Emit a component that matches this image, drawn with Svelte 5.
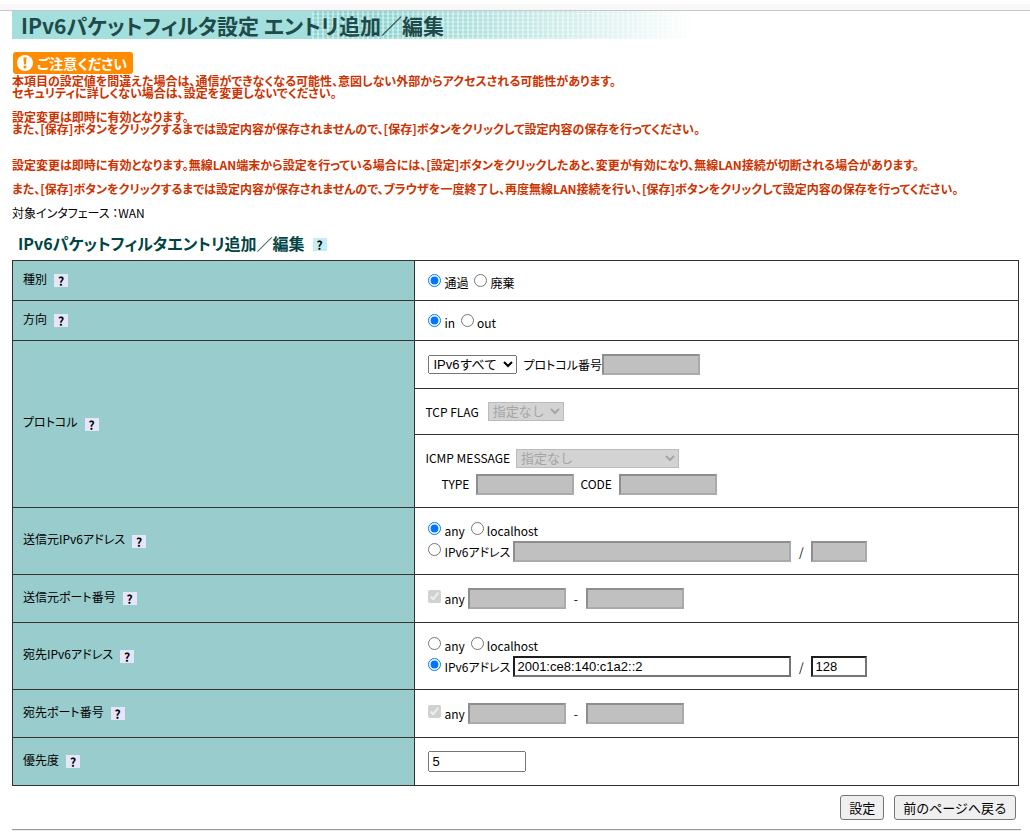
<script lang="ts">
  let kind = $state('pass');
  let direction = $state('in');
  let protocol = $state('all');
  let srcType = $state('any');
  let dstType = $state('address');
  let dstAddress = $state('2001:ce8:140:c1a2::2');
  let dstPrefix = $state('128');
  let priority = $state('5');
</script>

{#snippet help(topic: string)}
  <a class="help" href="#help-{topic}" aria-label="ヘルプ">?</a>
{/snippet}

{#snippet heading(text: string, topic: string)}
  <div class="heading">
    <span>{text}</span>
    {@render help(topic)}
  </div>
{/snippet}

{#snippet ports(name: string)}
  <div class="line tight">
    <label class="choice"><input type="checkbox" checked disabled />any</label>
    <div class="range">
      <input class="short" type="text" aria-label="{name} 開始" disabled />
      <span>-</span>
      <input class="short" type="text" aria-label="{name} 終了" disabled />
    </div>
  </div>
{/snippet}

<div class="strip"></div>
<main>
  <h1>IPv6パケットフィルタ設定 エントリ追加／編集</h1>

  <div class="badge">
    <svg width="16" height="16" viewBox="0 0 16 16" aria-hidden="true">
      <circle cx="8" cy="8" r="8" fill="#fff" />
      <path d="M6.4 2.6h3.2l-.6 6.8H7z" fill="#ff8c00" />
      <circle cx="8" cy="11.9" r="1.5" fill="#ff8c00" />
    </svg>
    <span>ご注意ください</span>
  </div>

  <div class="warning">
    <p>
      本項目の設定値を間違えた場合は、通信ができなくなる可能性、意図しない外部からアクセスされる可能性があります。<br />
      セキュリティに詳しくない場合は、設定を変更しないでください。
    </p>
    <p>
      設定変更は即時に有効となります。<br />
      また、[保存]ボタンをクリックするまでは設定内容が保存されませんので、[保存]ボタンをクリックして設定内容の保存を行ってください。
    </p>
    <p class="wireless">
      設定変更は即時に有効となります。無線LAN端末から設定を行っている場合には、[設定]ボタンをクリックしたあと、変更が有効になり、無線LAN接続が切断される場合があります。
    </p>
    <p>
      また、[保存]ボタンをクリックするまでは設定内容が保存されませんので、ブラウザを一度終了し、再度無線LAN接続を行い、[保存]ボタンをクリックして設定内容の保存を行ってください。
    </p>
  </div>

  <p>対象インタフェース ：WAN</p>

  <div class="section">
    <h2>IPv6パケットフィルタエントリ追加／編集</h2>
    {@render help('entry')}
  </div>

  <form onsubmit={(e) => e.preventDefault()}>
    <table>
      <tbody>
        <tr class="low">
          <th scope="row">{@render heading('種別', 'kind')}</th>
          <td>
            <div class="line single">
              <label class="choice"><input type="radio" value="pass" bind:group={kind} />通過</label>
              <label class="choice"><input type="radio" value="drop" bind:group={kind} />廃棄</label>
            </div>
          </td>
        </tr>
        <tr class="low">
          <th scope="row">{@render heading('方向', 'direction')}</th>
          <td>
            <div class="line single">
              <label class="choice"><input type="radio" value="in" bind:group={direction} />in</label>
              <label class="choice"><input type="radio" value="out" bind:group={direction} />out</label>
            </div>
          </td>
        </tr>
        <tr class="mid">
          <th scope="rowgroup" rowspan="3">{@render heading('プロトコル', 'protocol')}</th>
          <td>
            <div class="line inset">
              <select class="protocol" aria-label="プロトコル" bind:value={protocol}>
                <option value="all">IPv6すべて</option>
              </select>
              <label class="field">プロトコル番号<input class="short" type="text" disabled /></label>
            </div>
          </td>
        </tr>
        <tr class="tcp">
          <td>
            <label class="line loose">
              TCP FLAG
              <select class="flag" disabled><option>指定なし</option></select>
            </label>
          </td>
        </tr>
        <tr class="icmp">
          <td>
            <label class="line">
              ICMP MESSAGE
              <select class="message" disabled><option>指定なし</option></select>
            </label>
            <div class="line codes">
              <label class="field wide">TYPE<input class="short" type="text" disabled /></label>
              <label class="field wide">CODE<input class="short" type="text" disabled /></label>
            </div>
          </td>
        </tr>
        <tr class="tall">
          <th scope="row">{@render heading('送信元IPv6アドレス', 'src-address')}</th>
          <td>
            <div class="line">
              <label class="choice"><input type="radio" value="any" bind:group={srcType} />any</label>
              <label class="choice"><input type="radio" value="localhost" bind:group={srcType} />localhost</label>
            </div>
            <div class="line tight">
              <label class="choice"><input type="radio" value="address" bind:group={srcType} />IPv6アドレス</label>
              <div class="range">
                <input class="address" type="text" aria-label="送信元IPv6アドレス" disabled />
                <span>/</span>
                <input class="prefix" type="text" aria-label="送信元プレフィックス長" disabled />
              </div>
            </div>
          </td>
        </tr>
        <tr class="mid">
          <th scope="row">{@render heading('送信元ポート番号', 'src-port')}</th>
          <td>{@render ports('送信元ポート番号')}</td>
        </tr>
        <tr class="tall">
          <th scope="row">{@render heading('宛先IPv6アドレス', 'dst-address')}</th>
          <td>
            <div class="line">
              <label class="choice"><input type="radio" value="any" bind:group={dstType} />any</label>
              <label class="choice"><input type="radio" value="localhost" bind:group={dstType} />localhost</label>
            </div>
            <div class="line tight">
              <label class="choice"><input type="radio" value="address" bind:group={dstType} />IPv6アドレス</label>
              <div class="range">
                <input class="address filled" type="text" aria-label="宛先IPv6アドレス" bind:value={dstAddress} />
                <span>/</span>
                <input class="prefix filled" type="text" aria-label="宛先プレフィックス長" bind:value={dstPrefix} />
              </div>
            </div>
          </td>
        </tr>
        <tr class="mid">
          <th scope="row">{@render heading('宛先ポート番号', 'dst-port')}</th>
          <td>{@render ports('宛先ポート番号')}</td>
        </tr>
        <tr class="mid">
          <th scope="row">{@render heading('優先度', 'priority')}</th>
          <td>
            <div class="line inset">
              <input class="short" type="text" aria-label="優先度" bind:value={priority} />
            </div>
          </td>
        </tr>
      </tbody>
    </table>

    <div class="actions">
      <button type="submit">設定</button>
      <button type="button">前のページへ戻る</button>
    </div>
  </form>
  <hr />
</main>

<style>
  :global(body) {
    background: #fff;
    color: #000;
    font-family: 'Noto Sans CJK JP', sans-serif;
    font-size: 12px;
    line-height: 12px;
    font-feature-settings: 'palt';
  }

  .strip {
    height: 6px;
    margin-top: 4px;
    background: #f8f8f8;
    border-bottom: 1px solid #c8c8c8;
  }

  main {
    padding: 0 11px 0 12px;
  }

  h1 {
    margin: 0;
    padding-left: 9px;
    height: 28px;
    font-size: 21px;
    line-height: 28px;
    font-weight: 700;
    color: #1f4a4a;
    white-space: nowrap;
    background:
      linear-gradient(to right, rgba(255, 255, 255, 0) 360px, #fff 684px),
      repeating-linear-gradient(to right, rgba(255, 255, 255, 0.4) 0 2px, transparent 2px 5px) 300px 0 no-repeat,
      repeating-linear-gradient(to bottom, rgba(90, 180, 175, 0.3) 0 2px, transparent 2px 4px) 300px 0 no-repeat,
      #a3dfdc;
  }

  .badge {
    display: flex;
    align-items: center;
    gap: 4px;
    box-sizing: border-box;
    width: 120px;
    height: 22px;
    margin: 13px 0 1px 1px;
    padding-left: 4px;
    border-radius: 3px;
    background: #ff8c00;
    color: #fff;
    font-size: 14px;
    font-weight: 700;
    white-space: nowrap;
  }

  .warning {
    color: #cc3300;
    font-weight: 700;
  }

  p {
    margin: 0 0 12px;
  }

  .wireless {
    margin-top: 24px;
  }

  .section {
    display: flex;
    align-items: center;
    gap: 8px;
    margin: 15px 0 9px 6px;
  }

  h2 {
    margin: 0;
    font-size: 16px;
    line-height: 16px;
    font-weight: 700;
    color: #004444;
  }

  .help {
    width: 14px;
    height: 13px;
    line-height: 13px;
    color: #000;
    font-weight: 700;
    text-align: center;
    text-decoration: none;
    background: #e6e6fa;
  }

  .section .help {
    margin-top: 4px;
    background: #c4eef4;
  }

  table {
    width: 100%;
    border-collapse: collapse;
    table-layout: fixed;
  }

  th,
  td {
    padding: 0 10px;
    border: 1px solid #333;
    vertical-align: middle;
    text-align: left;
    font-weight: 400;
  }

  th {
    width: 40%;
    box-sizing: border-box;
    background: #99cccc;
  }

  .low {
    height: 40px;
  }

  .mid {
    height: 48px;
  }

  .tcp {
    height: 46px;
  }

  .icmp {
    height: 73px;
  }

  .tall {
    height: 67px;
  }

  .heading {
    display: flex;
    align-items: center;
    gap: 7px;
  }

  .heading span {
    padding-bottom: 4px;
  }

  .line {
    display: flex;
    align-items: center;
    gap: 6px;
    min-height: 21px;
  }

  .tight {
    gap: 3px;
  }

  .loose {
    gap: 9px;
  }

  .single {
    padding-top: 4px;
  }

  .inset {
    padding-left: 3px;
  }

  .codes {
    margin-top: 5px;
    padding-left: 16px;
  }

  .choice {
    display: flex;
    align-items: center;
  }

  .choice input {
    width: 13px;
    height: 13px;
    margin: 0 3px 4px;
  }

  .choice + .choice {
    margin-left: -3px;
  }

  .field {
    display: flex;
    align-items: center;
  }

  .wide {
    gap: 7px;
  }

  .range {
    display: flex;
    align-items: center;
  }

  .range span {
    width: 20px;
    text-align: center;
  }

  input[type='text'],
  select {
    box-sizing: border-box;
    margin: 0;
    font-family: 'Liberation Sans', 'Noto Sans CJK JP', sans-serif;
    font-size: 13px;
    font-feature-settings: normal;
  }

  input[type='text'] {
    height: 21px;
    padding: 1px 2px;
  }

  input[type='text']:disabled {
    border: 2px solid;
    border-color: #8e8e8e #aaa #aaa #8e8e8e;
    background: #c0c0c0;
  }

  input.filled {
    border: 2px solid;
    border-color: #1e1e1e #767676 #767676 #1e1e1e;
    background: #fff;
  }

  .short {
    width: 98px;
  }

  .address {
    width: 278px;
  }

  .prefix {
    width: 56px;
  }

  select {
    height: 19px;
  }

  select:disabled {
    border: 1px solid #bbb;
    border-radius: 0;
    background-color: #d3d3d3;
    color: #a5a5a5;
    opacity: 1;
  }

  .protocol {
    width: 89px;
  }

  .flag {
    width: 76px;
  }

  .message {
    width: 163px;
  }

  .actions {
    display: flex;
    justify-content: flex-end;
    gap: 10px;
    padding: 9px 3px 9px 0;
  }

  button {
    height: 25px;
    padding: 0 8px;
    border: 1px solid #767676;
    border-radius: 3px;
    background: #efefef;
    font-family: 'Liberation Sans', 'Noto Sans CJK JP', sans-serif;
    font-size: 13px;
  }

  hr {
    margin: 0 -2px 0 0;
    border: 0;
    border-top: 1px solid #999;
    border-bottom: 1px solid #eee;
  }
</style>
